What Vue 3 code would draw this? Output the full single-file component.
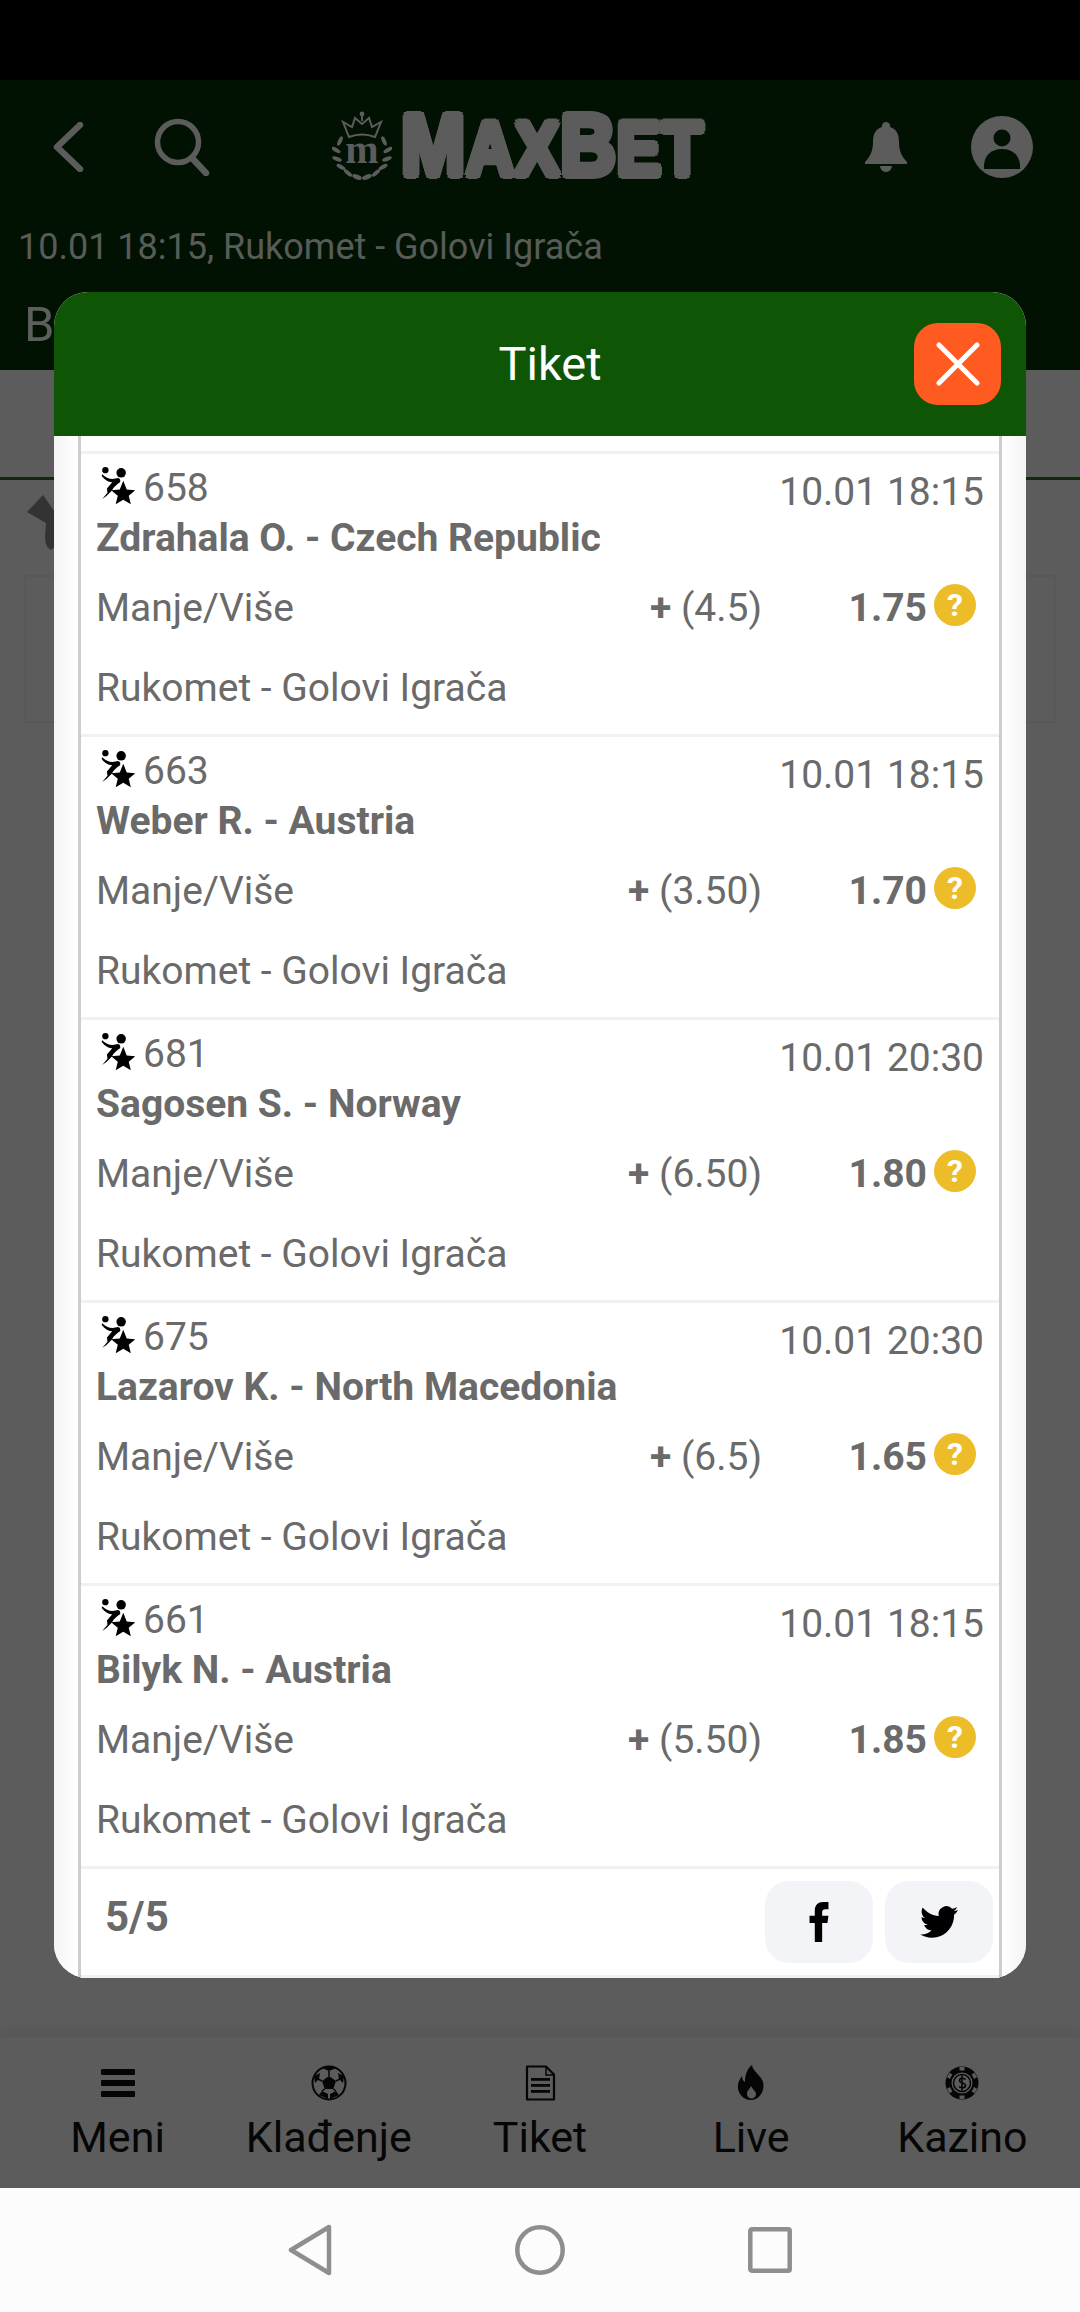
<script setup>
const rows = [
  { id: 658, time: '10.01 18:15', name: 'Zdrahala O. - Czech Republic', value: '(4.5)', odds: '1.75' },
  { id: 663, time: '10.01 18:15', name: 'Weber R. - Austria', value: '(3.50)', odds: '1.70' },
  { id: 681, time: '10.01 20:30', name: 'Sagosen S. - Norway', value: '(6.50)', odds: '1.80' },
  { id: 675, time: '10.01 20:30', name: 'Lazarov K. - North Macedonia', value: '(6.5)', odds: '1.65' },
  { id: 661, time: '10.01 18:15', name: 'Bilyk N. - Austria', value: '(5.50)', odds: '1.85' },
];
</script>

<template>
  <div class="page">
    <div class="status"></div>

    <header class="head">
      <div class="topbar">
        <svg class="ic-back" viewBox="0 0 32 50"><path d="M28 3 5 25l23 22" fill="none" stroke="#5c5c5c" stroke-width="6.5" stroke-linecap="round" stroke-linejoin="round"/></svg>
        <svg class="ic-search" viewBox="0 0 56 58"><circle cx="24" cy="24" r="20.5" fill="none" stroke="#5c5c5c" stroke-width="5.5"/><path d="m38 40 14 15" stroke="#5c5c5c" stroke-width="6.5" stroke-linecap="round"/></svg>

        <div class="logo">
          <div class="emblem">
            <svg viewBox="0 0 60 72">
              <path d="M17 26 11 11l9 5 3-9 7 6 7-6 3 9 9-5-6 15c-8-3-18-3-26 0Z" fill="none" stroke="#5c5c5c" stroke-width="2"/>
              <circle cx="30" cy="3" r="2.4" fill="#5c5c5c"/>
              <path d="M30 5v5" stroke="#5c5c5c" stroke-width="2"/>
              <g fill="#5c5c5c">
                <ellipse cx="8" cy="30" rx="2" ry="5" transform="rotate(25 8 30)"/>
                <ellipse cx="4" cy="39" rx="2" ry="5" transform="rotate(-60 4 39)"/>
                <ellipse cx="5" cy="48" rx="2" ry="5" transform="rotate(-70 5 48)"/>
                <ellipse cx="9" cy="56" rx="2" ry="5" transform="rotate(-60 9 56)"/>
                <ellipse cx="16" cy="62" rx="2" ry="5" transform="rotate(-50 16 62)"/>
                <ellipse cx="25" cy="66" rx="2.4" ry="5" transform="rotate(-70 25 66)"/>
                <ellipse cx="52" cy="30" rx="2" ry="5" transform="rotate(-25 52 30)"/>
                <ellipse cx="56" cy="39" rx="2" ry="5" transform="rotate(60 56 39)"/>
                <ellipse cx="55" cy="48" rx="2" ry="5" transform="rotate(70 55 48)"/>
                <ellipse cx="51" cy="56" rx="2" ry="5" transform="rotate(60 51 56)"/>
                <ellipse cx="44" cy="62" rx="2" ry="5" transform="rotate(50 44 62)"/>
                <ellipse cx="35" cy="66" rx="2.4" ry="5" transform="rotate(70 35 66)"/>
              </g>
            </svg>
            <span class="emblem-m">m</span>
          </div>
          <span class="wordmark">M<small>AX</small>B<small>ET</small></span>
        </div>

        <svg class="ic-bell" viewBox="0 0 42 50"><path d="M21 0a4 4 0 0 1 4 5c7 2 9 8 9 15 0 9 3 15 8 20v2H0v-2c5-5 8-11 8-20 0-7 2-13 9-15a4 4 0 0 1 4-5ZM15 44h12a6 6 0 0 1-12 0Z" fill="#5c5c5c"/></svg>
        <svg class="ic-user" viewBox="0 0 62 62"><circle cx="31" cy="31" r="31" fill="#5c5c5c"/><circle cx="31" cy="22" r="8.5" fill="#021202"/><path d="M13 53c-1-13 7-20 18-20s19 7 18 20Z" fill="#021202"/></svg>
      </div>
      <div class="subtitle">10.01 18:15, Rukomet - Golovi Igrača</div>
      <div class="tab">B</div>
    </header>

    <main class="content">
      <div class="tabs-row"></div>
      <svg class="ic-pin" viewBox="0 0 30 60"><path d="M0 17 16 0l14 20v30l-6 5c-5-3-6-8-6-14l1-13Z" fill="#333"/></svg>
      <div class="ghost-box"></div>
    </main>

    <nav class="tabbar">
      <div class="tabbar-item">
        <svg class="tab-ic" viewBox="0 0 36 36"><g fill="#050505"><rect x="1" y="4" width="34" height="6" rx="1"/><rect x="1" y="15" width="34" height="6" rx="1"/><rect x="1" y="26" width="34" height="6" rx="1"/></g></svg>
        <span>Meni</span>
      </div>
      <div class="tabbar-item">
        <svg class="tab-ic" viewBox="0 0 36 36">
          <circle cx="18" cy="18" r="16.5" fill="none" stroke="#050505" stroke-width="2"/>
          <g fill="#050505">
            <path d="m18 11 7 5-2.700 8h-8.600L11 16Z"/>
            <path d="M12 3.500 18 6l6-2.500-1-1.500h-10ZM3 11l1 7 4-4 1-6ZM33 11l-1 7-4-4-1-6ZM8 30l3-4 6 3v5ZM28 30l-3-4-6 3v5Z"/>
          </g>
          <path d="M18 6v5M11 16l-4-2M25 16l4-2M13.700 24l-2.700 2M22.300 24l2.700 2" stroke="#050505" stroke-width="1.500"/>
        </svg>
        <span>Klađenje</span>
      </div>
      <div class="tabbar-item">
        <svg class="tab-ic" viewBox="0 0 36 36">
          <path d="M5 1.500h19l8 8v25H5Z" fill="none" stroke="#050505" stroke-width="2.200" stroke-linejoin="round"/>
          <path d="M24 2v8h8" fill="none" stroke="#050505" stroke-width="1.500"/>
          <g fill="#050505"><rect x="9" y="13" width="19" height="2.800"/><rect x="9" y="19" width="19" height="2.800"/><rect x="9" y="25" width="19" height="2.800"/></g>
        </svg>
        <span>Tiket</span>
      </div>
      <div class="tabbar-item">
        <svg class="tab-ic" viewBox="0 0 36 36">
          <path fill-rule="evenodd" d="M19 0c1 7 9 10 11 17 2 8-3 18-12 18S4 27 5 20c.5-4 2-6 4-9 0 3 1 5 3 6 0-7 2-13 7-17Zm-1 21c-1 3-4 4-4 8a4.500 4.500 0 0 0 9 0c0-3-3-4-5-8Z" fill="#050505"/>
        </svg>
        <span>Live</span>
      </div>
      <div class="tabbar-item">
        <svg class="tab-ic" viewBox="0 0 36 36">
          <circle cx="18" cy="18" r="16.500" fill="#050505"/>
          <g fill="#5c5c5c">
            <rect x="15.500" y="2" width="5" height="3.500"/><rect x="15.500" y="30.500" width="5" height="3.500"/>
            <rect x="15.500" y="2" width="5" height="3.500" transform="rotate(60 18 18)"/><rect x="15.500" y="2" width="5" height="3.500" transform="rotate(120 18 18)"/>
            <rect x="15.500" y="2" width="5" height="3.500" transform="rotate(240 18 18)"/><rect x="15.500" y="2" width="5" height="3.500" transform="rotate(300 18 18)"/>
          </g>
          <circle cx="18" cy="18" r="10.500" fill="#5c5c5c"/>
          <circle cx="18" cy="18" r="8.500" fill="none" stroke="#050505" stroke-width="1.500"/>
          <path d="M21.500 14.500c-1-1.500-6-2-6 1 0 3 6 2 6 5s-5 2.500-6.500 1M18 10.500v15" fill="none" stroke="#050505" stroke-width="1.600"/>
        </svg>
        <span>Kazino</span>
      </div>
    </nav>

    <div class="sysnav">
      <svg class="sys-back" viewBox="0 0 44 52"><path d="M41 3v46L3 26Z" fill="none" stroke="#8e8e8e" stroke-width="4.500" stroke-linejoin="round"/></svg>
      <svg class="sys-home" viewBox="0 0 50 50"><circle cx="25" cy="25" r="22.700" fill="none" stroke="#8e8e8e" stroke-width="4.500"/></svg>
      <svg class="sys-recent" viewBox="0 0 44 46"><rect x="2.300" y="2.300" width="39.400" height="41.400" rx="1.500" fill="none" stroke="#8e8e8e" stroke-width="4.500"/></svg>
    </div>

    <section class="modal">
      <div class="modal-head">
        <span class="modal-title">Tiket</span>
        <button class="close">
          <svg viewBox="0 0 44 44"><path d="m3 3 38 38M41 3 3 41" stroke="#fff" stroke-width="5" stroke-linecap="round"/></svg>
        </button>
      </div>
      <div class="modal-body">
        <div class="list">
          <div class="peek"></div>
          <article v-for="r in rows" :key="r.id" class="row">
            <div class="row-top">
              <span class="row-id">
                <svg class="ic-hand" viewBox="0 0 32 38">
                  <circle cx="4" cy="3" r="3" fill="#000"/>
                  <circle cx="19" cy="5.500" r="4.500" fill="#000"/>
                  <path d="M1 7c3 3 6 4.500 10 4.500l5-1c2 .5 2.500 2 2 4-2 1-4 3-6 5l-2 3-5 5-4 3 5-6-.5-4 5-6c-3 0-7-2-10-6Z" fill="#000"/>
                  <path d="m21 13 3.300 8.300 8.200.7-6.300 5.400 2 8.100-7.200-4.300-7.200 4.300 2-8.100-6.300-5.400 8.200-.7Z" fill="#000"/>
                </svg>
                {{ r.id }}
              </span>
              <span class="row-time">{{ r.time }}</span>
            </div>
            <div class="row-name">{{ r.name }}</div>
            <div class="row-market">
              <span class="market-name">Manje/Više</span>
              <span class="market-val"><b>+</b> {{ r.value }}</span>
              <b class="market-odds">{{ r.odds }}</b>
              <span class="help">?</span>
            </div>
            <div class="row-sport">Rukomet - Golovi Igrača</div>
          </article>
          <div class="foot">
            <span class="count">5/5</span>
            <div class="share">
              <div class="share-btn">
                <svg width="20" height="40" viewBox="0 0 18 38"><path d="M5 38V20H0v-7h5V8c0-5 3-8 8-8h5v7h-3c-2 0-3 1-3 3v3h6l-1 7h-5v18Z" fill="#000"/></svg>
              </div>
              <div class="share-btn">
                <svg width="38" height="32" viewBox="0 0 24 20"><path d="M24 2.400c-.9.4-1.800.7-2.800.8 1-.6 1.800-1.500 2.200-2.700-1 .6-2 1-3.100 1.200A4.900 4.900 0 0 0 11.900 6.200C7.800 6 4.200 4 1.700.9.400 3.200 1 6.100 3.200 7.500c-.8 0-1.600-.2-2.200-.6 0 2.400 1.700 4.400 3.900 4.900-.7.200-1.500.2-2.200.1.600 2 2.400 3.400 4.600 3.400A9.900 9.900 0 0 1 0 17.800 14 14 0 0 0 7.500 20c9.100 0 14.300-7.700 14-14.600 1-.7 1.800-1.600 2.500-3Z" fill="#000"/></svg>
              </div>
            </div>
          </div>
        </div>
      </div>
    </section>
  </div>
</template>

<style>
html, body { margin: 0; background: #5c5c5c; }
</style>

<style scoped>
.page {
  position: relative;
  width: 1080px;
  height: 2312px;
  display: flex;
  flex-direction: column;
  overflow: hidden;
  background: #5c5c5c;
  font-family: Roboto, "Liberation Sans", sans-serif;
}

.status {
  height: 80px;
  background: #000;
  flex: none;
}

.head {
  height: 290px;
  flex: none;
  background: #021202;
  color: #5c5c5c;
}

.topbar {
  height: 134px;
  position: relative;
  display: flex;
  align-items: center;
}

.ic-back { width: 32px; height: 50px; margin-left: 52px; }
.ic-search { width: 56px; height: 58px; margin-left: 70px; }
.ic-bell { width: 42px; height: 50px; position: absolute; left: 865px; top: 42px; }
.ic-user { width: 62px; height: 62px; position: absolute; left: 971px; top: 36px; }

.logo {
  display: flex;
  align-items: center;
  margin-left: 122px;
  gap: 9px;
}

.emblem {
  position: relative;
  width: 60px;
  height: 72px;
}

.emblem svg { width: 60px; height: 72px; display: block; }

.emblem-m {
  position: absolute;
  left: 0;
  right: 0;
  top: 21px;
  text-align: center;
  font-family: "Liberation Serif", serif;
  font-weight: 700;
  font-size: 40px;
  line-height: 36px;
  color: #5c5c5c;
}

.wordmark {
  display: inline-block;
  transform: scaleX(0.875);
  transform-origin: left center;
  font-family: "Liberation Sans", sans-serif;
  font-weight: 700;
  font-size: 88px;
  line-height: 80px;
  letter-spacing: 1px;
  color: #5c5c5c;
  -webkit-text-stroke: 4px #021202;
  paint-order: stroke fill;
  text-shadow: 4px 0 0 #5c5c5c, -4px 0 0 #5c5c5c, 0 4px 0 #5c5c5c, 0 -4px 0 #5c5c5c,
    3px 3px 0 #5c5c5c, -3px 3px 0 #5c5c5c, 3px -3px 0 #5c5c5c, -3px -3px 0 #5c5c5c;
}

.wordmark small { font-size: 76px; }

.subtitle {
  height: 66px;
  line-height: 66px;
  padding-left: 18px;
  font-size: 36px;
  color: #585c58;
}

.tab {
  height: 90px;
  line-height: 90px;
  padding-left: 24px;
  font-size: 49px;
  color: #5c5f5c;
}

.content {
  flex: 1;
  background: #5c5c5c;
}

.tabs-row {
  height: 107px;
  border-bottom: 3px solid #0e2b09;
}

.ic-pin {
  display: block;
  width: 30px;
  height: 60px;
  margin: 15px 0 0 27px;
}

.ghost-box {
  height: 148px;
  margin: 20px 24px 0;
  border: 2px solid #585858;
  box-sizing: border-box;
}

.tabbar {
  height: 151px;
  flex: none;
  padding: 0 12px;
  display: grid;
  grid-template-columns: repeat(5, 1fr);
  background: #5c5c5c;
  box-shadow: 0 -6px 14px rgba(0, 0, 0, 0.07);
  color: #060606;
}

.tabbar-item {
  display: flex;
  flex-direction: column;
  align-items: center;
  padding-top: 28px;
  font-size: 43px;
  line-height: 44px;
}

.tab-ic {
  width: 36px;
  height: 36px;
  margin-bottom: 14px;
}

.sysnav {
  height: 124px;
  flex: none;
  background: #fcfcfc;
  display: flex;
  align-items: center;
  justify-content: center;
  gap: 183px;
}

.sys-back { width: 44px; height: 52px; }
.sys-home { width: 50px; height: 50px; }
.sys-recent { width: 44px; height: 46px; }

.modal {
  position: absolute;
  left: 54px;
  top: 292px;
  width: 972px;
  height: 1686px;
  border-radius: 34px;
  overflow: hidden;
  background: #fff;
  display: flex;
  flex-direction: column;
}

.modal-head {
  height: 144px;
  flex: none;
  position: relative;
  background: #0f5506;
  display: flex;
  align-items: center;
  justify-content: center;
}

.modal-title {
  font-size: 47px;
  color: #fff;
  margin: -2px 0 0 20px;
}

.close {
  position: absolute;
  right: 25px;
  top: 31px;
  width: 87px;
  height: 82px;
  padding: 0;
  border: 0;
  border-radius: 24px;
  background: #ff5a20;
  display: flex;
  align-items: center;
  justify-content: center;
}

.close svg { width: 44px; height: 44px; }

.modal-body {
  flex: 1;
  padding: 0 24px;
  background: linear-gradient(90deg, #f4f4f4, #fff 24px, #fff 948px, #f4f4f4);
  min-height: 0;
}

.list {
  height: 100%;
  box-sizing: border-box;
  border-left: 3px solid #cdcdcd;
  border-right: 3px solid #cdcdcd;
  background: #fff;
  color: #6a6a6a;
  font-size: 39px;
}

.peek { height: 15px; }

.row {
  height: 283px;
  box-sizing: border-box;
  border-top: 3px solid #f1f1f1;
  padding: 9px 15px 0;
}

.row-top {
  display: flex;
  justify-content: space-between;
  height: 50px;
  line-height: 50px;
}

.row-id {
  display: flex;
  align-items: center;
  gap: 8px;
  padding-left: 5px;
}

.ic-hand { width: 34px; height: 40px; margin-top: -2px; }

.row-time { margin-top: 4px; }

.row-name {
  height: 50px;
  line-height: 50px;
  font-weight: 700;
}

.row-market {
  margin-top: 20px;
  height: 50px;
  line-height: 50px;
  display: flex;
  align-items: center;
}

.market-name { flex: 1; }

.market-val { width: 300px; text-align: right; }

.market-odds { width: 165px; text-align: right; }

.help {
  width: 42px;
  height: 42px;
  margin: -6px 8px 0 7px;
  border-radius: 50%;
  background: #edbc29;
  color: #fff;
  font-size: 32px;
  font-weight: 700;
  line-height: 42px;
  text-align: center;
}

.row-sport {
  margin-top: 30px;
  height: 50px;
  line-height: 50px;
}

.foot {
  height: 106px;
  border-top: 3px solid #f1f1f1;
  border-bottom: 3px solid #f1f1f1;
  display: flex;
  justify-content: space-between;
  padding: 0 6px 0 24px;
}

.count {
  font-size: 42px;
  font-weight: 700;
  line-height: 96px;
}

.share {
  display: flex;
  gap: 12px;
  padding-top: 12px;
}

.share-btn {
  width: 108px;
  height: 82px;
  border-radius: 24px;
  background: #f3f4f8;
  display: flex;
  align-items: center;
  justify-content: center;
}
</style>
